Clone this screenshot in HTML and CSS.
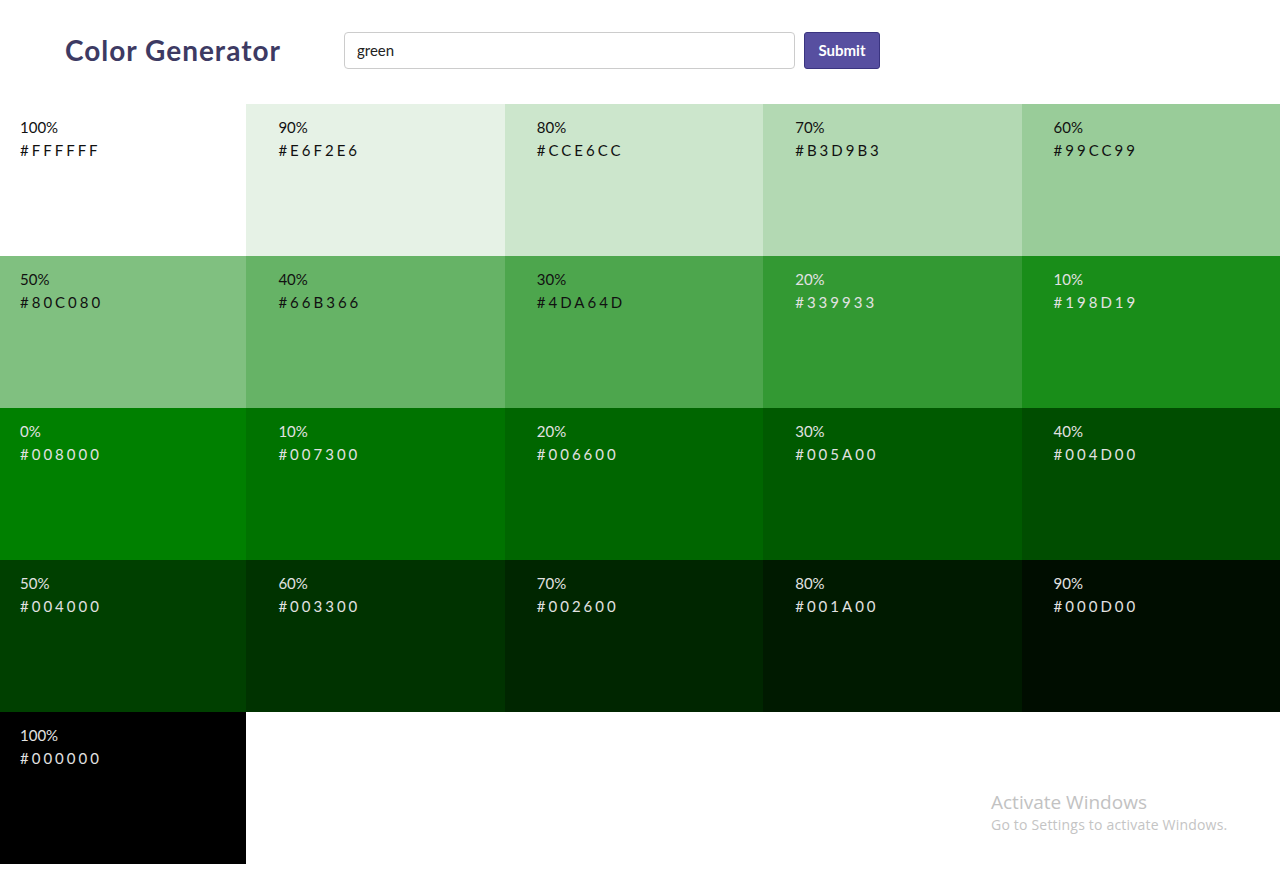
FILE: index.html
```html
<!DOCTYPE html>
<html lang="en">
<head>
<meta charset="utf-8">
<title>Color Generator</title>
<link rel="stylesheet" href="styles.css">
</head>
<body>
<header class="header">
  <h1 class="title">Color Generator</h1>
  <form class="form">
    <input class="field" type="text" value="green">
    <button class="btn" type="button">Submit</button>
  </form>
</header>
<main class="colors">
  <article class="tile" style="background:#ffffff"><p class="pct">100%</p><p class="hex">#FFFFFF</p></article>
  <article class="tile" style="background:#e6f2e6"><p class="pct">90%</p><p class="hex">#E6F2E6</p></article>
  <article class="tile" style="background:#cce6cc"><p class="pct">80%</p><p class="hex">#CCE6CC</p></article>
  <article class="tile" style="background:#b3d9b3"><p class="pct">70%</p><p class="hex">#B3D9B3</p></article>
  <article class="tile" style="background:#99cc99"><p class="pct">60%</p><p class="hex">#99CC99</p></article>
  <article class="tile" style="background:#80c080"><p class="pct">50%</p><p class="hex">#80C080</p></article>
  <article class="tile" style="background:#66b366"><p class="pct">40%</p><p class="hex">#66B366</p></article>
  <article class="tile" style="background:#4da64d"><p class="pct">30%</p><p class="hex">#4DA64D</p></article>
  <article class="tile light" style="background:#339933"><p class="pct">20%</p><p class="hex">#339933</p></article>
  <article class="tile light" style="background:#198d19"><p class="pct">10%</p><p class="hex">#198D19</p></article>
  <article class="tile light" style="background:#008000"><p class="pct">0%</p><p class="hex">#008000</p></article>
  <article class="tile light" style="background:#007300"><p class="pct">10%</p><p class="hex">#007300</p></article>
  <article class="tile light" style="background:#006600"><p class="pct">20%</p><p class="hex">#006600</p></article>
  <article class="tile light" style="background:#005a00"><p class="pct">30%</p><p class="hex">#005A00</p></article>
  <article class="tile light" style="background:#004d00"><p class="pct">40%</p><p class="hex">#004D00</p></article>
  <article class="tile light" style="background:#004000"><p class="pct">50%</p><p class="hex">#004000</p></article>
  <article class="tile light" style="background:#003300"><p class="pct">60%</p><p class="hex">#003300</p></article>
  <article class="tile light" style="background:#002600"><p class="pct">70%</p><p class="hex">#002600</p></article>
  <article class="tile light" style="background:#001a00"><p class="pct">80%</p><p class="hex">#001A00</p></article>
  <article class="tile light" style="background:#000d00"><p class="pct">90%</p><p class="hex">#000D00</p></article>
  <article class="tile light" style="background:#000000"><p class="pct">100%</p><p class="hex">#000000</p></article>
</main>
<div class="activate">
  <p class="activate-title">Activate Windows</p>
  <p class="activate-sub">Go to Settings to activate Windows.</p>
</div>
</body>
</html>
```
FILE: styles.css
```css
* { box-sizing: border-box; }
html, body { margin: 0; padding: 0; }
body {
  font-family: Lato, "Noto Sans", sans-serif;
  background: #ffffff;
  color: #222222;
  overflow: hidden;
  height: 872px;
}
.header {
  display: flex;
  align-items: center;
  height: 104px;
  padding-left: 65px;
  padding-bottom: 4px;
}
.title {
  margin: 0 65px 0 0;
  font-size: 28px;
  font-weight: 700;
  letter-spacing: 1px;
  color: #3d3a63;
  width: 214px;
  white-space: nowrap;
}
.form {
  display: flex;
  gap: 9px;
}
.field {
  width: 451px;
  height: 37px;
  border: 1px solid #cccccc;
  border-radius: 4px;
  padding: 0 12px;
  font-family: Lato, sans-serif;
  font-size: 15px;
  color: #222;
}
.btn {
  width: 76px;
  height: 37px;
  background: #574fa0;
  border: 1px solid #3a3480;
  border-radius: 3px;
  color: #ffffff;
  font-family: Lato, sans-serif;
  font-size: 15px;
  font-weight: 700;
}
.colors {
  display: grid;
  grid-template-columns: repeat(5, 1fr);
  grid-auto-rows: 152px;
  margin-left: -12px;
  width: 1292px;
}
.tile {
  padding: 13px 32px;
  color: #111111;
}
.tile.light { color: #e2e2e2; }
.pct {
  margin: 0;
  font-size: 15px;
  line-height: 20px;
}
.hex {
  margin: 3px 0 0;
  font-size: 15px;
  line-height: 20px;
  letter-spacing: 3px;
}
.activate {
  position: absolute;
  left: 991px;
  top: 789px;
  font-family: "Open Sans", "Noto Sans", sans-serif;
  color: #c2c2c2;
}
.activate p { margin: 0; }
.activate-title { font-size: 19px; line-height: 26px; }
.activate-sub { font-size: 14px; line-height: 20px; letter-spacing: 0.2px; color: #c4c4c4; }
```
